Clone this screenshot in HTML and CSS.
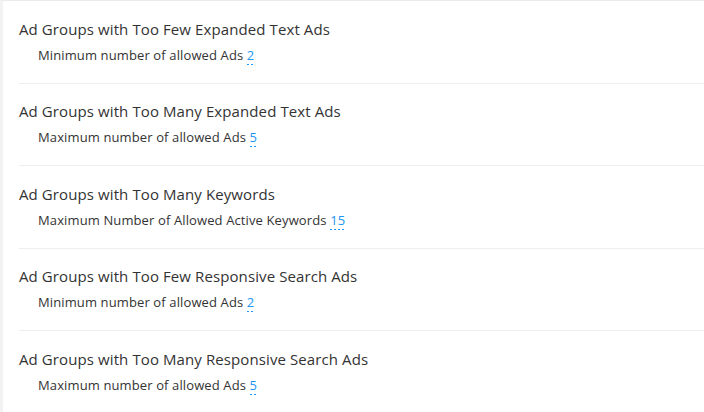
FILE: index.html
```html
<!DOCTYPE html>
<html lang="en">
<head>
<meta charset="utf-8">
<title>Ad Group Rules</title>
<link rel="stylesheet" href="styles.css">
</head>
<body>
<div class="panel">
  <ul class="rules">
    <li class="rule">
      <div class="rule-title">Ad Groups with Too Few Expanded Text Ads</div>
      <div class="rule-param">Minimum number of allowed Ads <span class="value">2</span></div>
    </li>
    <li class="rule">
      <div class="rule-title">Ad Groups with Too Many Expanded Text Ads</div>
      <div class="rule-param">Maximum number of allowed Ads <span class="value">5</span></div>
    </li>
    <li class="rule">
      <div class="rule-title">Ad Groups with Too Many Keywords</div>
      <div class="rule-param">Maximum Number of Allowed Active Keywords <span class="value">15</span></div>
    </li>
    <li class="rule">
      <div class="rule-title">Ad Groups with Too Few Responsive Search Ads</div>
      <div class="rule-param">Minimum number of allowed Ads <span class="value">2</span></div>
    </li>
    <li class="rule">
      <div class="rule-title">Ad Groups with Too Many Responsive Search Ads</div>
      <div class="rule-param">Maximum number of allowed Ads <span class="value">5</span></div>
    </li>
  </ul>
</div>
</body>
</html>
```

FILE: styles.css
```css
html, body {
  margin: 0;
  padding: 0;
  background: #ffffff;
}

body {
  font-family: "Open Sans", "Noto Sans", sans-serif;
  color: #333333;
  overflow: hidden;
}

.panel {
  border-left: 3px solid #f2f2f2;
  border-top: 1px solid #ebebeb;
  min-height: 411px;
}

.rules {
  list-style: none;
  margin: 0;
  padding: 0 0 0 16px;
}

.rule {
  padding: 17.6px 0 19px 0;
  border-bottom: 1px solid #eeeeee;
}

.rule:last-child {
  border-bottom: none;
}

.rule-title {
  font-size: 15px;
  line-height: 20px;
  letter-spacing: 0.1px;
  color: #333333;
}

.rule-param {
  margin-top: 7px;
  padding-left: 19px;
  font-size: 13px;
  line-height: 18px;
  letter-spacing: 0.12px;
  color: #333333;
}

.value {
  color: #2196f3;
  padding-bottom: 1px;
  background-image: linear-gradient(to right, #2196f3 50%, transparent 50%);
  background-size: 4px 1px;
  background-repeat: repeat-x;
  background-position: 0 100%;
}
```
